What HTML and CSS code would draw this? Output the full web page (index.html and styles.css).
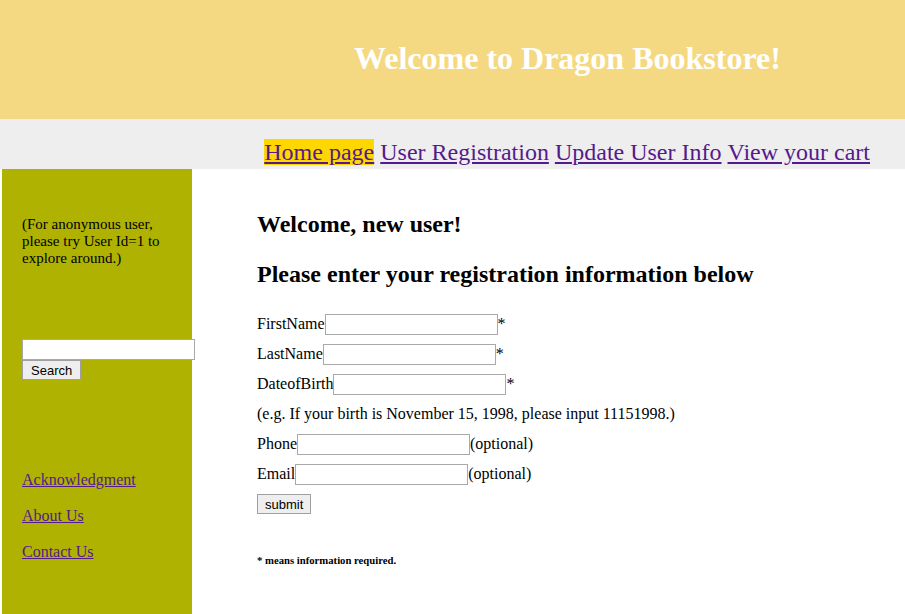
FILE: index.html
```html
<!DOCTYPE html>
<html>
<head>
<meta charset="utf-8">
<title>Dragon Bookstore</title>
<link rel="stylesheet" href="styles.css">
</head>
<body>
<div class="header"><h1 class="title">Welcome to Dragon Bookstore!</h1></div>
<div class="nav">
  <a class="nav-link current" href="#">Home page</a>
  <a class="nav-link" href="#">User Registration</a>
  <a class="nav-link" href="#">Update User Info</a>
  <a class="nav-link" href="#">View your cart</a>
</div>
<div class="body-row">
  <div class="sidebar">
    <p class="hint">(For anonymous user, please try User Id=1 to explore around.)</p>
    <form class="search">
      <input class="search-input" type="text">
      <button class="btn search-btn" type="button">Search</button>
    </form>
    <ul class="side-links">
      <li><a href="#">Acknowledgment</a></li>
      <li><a href="#">About Us</a></li>
      <li><a href="#">Contact Us</a></li>
    </ul>
  </div>
  <div class="main">
    <h2 class="heading">Welcome, new user!</h2>
    <h2 class="heading second">Please enter your registration information below</h2>
    <form class="reg">
      <div class="row">FirstName<input class="field" type="text">*</div>
      <div class="row">LastName<input class="field" type="text">*</div>
      <div class="row">DateofBirth<input class="field" type="text">*</div>
      <div class="row">(e.g. If your birth is November 15, 1998, please input 11151998.)</div>
      <div class="row">Phone<input class="field" type="text">(optional)</div>
      <div class="row">Email<input class="field" type="text">(optional)</div>
      <div class="row"><button class="btn" type="button">submit</button></div>
    </form>
    <p class="note">* means information required.</p>
  </div>
</div>
</body>
</html>
```
FILE: styles.css
```css
html, body {
  margin: 0;
  padding: 0;
  background: #fff;
  font-family: "Liberation Serif", "Times New Roman", serif;
  color: #000;
}
.header {
  height: 119px;
  background: #f5d982;
  display: flex;
  align-items: center;
}
.title {
  margin: 0 0 2px 0;
  padding-left: 354px;
  color: #fff;
  font-size: 32px;
  font-weight: bold;
}
.nav {
  height: 50px;
  background: #eeeeee;
  display: flex;
  justify-content: flex-end;
  align-items: flex-end;
  padding-right: 35px;
  gap: 6px;
}
.nav-link {
  font-size: 24px;
  color: #551a8b;
  line-height: 26px;
  margin-bottom: 4px;
}
.nav-link.current {
  background: #ffd700;
}
.body-row {
  display: flex;
  align-items: stretch;
  min-height: 445px;
}
.sidebar {
  width: 190px;
  margin-left: 2px;
  background: #afb200;
  padding: 47px 4px 0 20px;
  box-sizing: border-box;
  font-size: 15px;
}
.hint {
  margin: 0;
  line-height: 17px;
}
.search {
  margin-top: 72px;
  display: flex;
  flex-direction: column;
  align-items: flex-start;
}
.search-input {
  width: 173px;
  height: 21px;
  box-sizing: border-box;
  border: 1px solid #a9a9a9;
  margin: 0;
  background: #fff;
  flex-shrink: 0;
}
.btn {
  font-family: Arial, "Liberation Sans", sans-serif;
  font-size: 13px;
  padding: 1px 7px;
  height: 20px;
  border: 1px solid #a0a0a0;
  background: #eeeeee;
  color: #000;
  margin: 0;
}
.search-btn {
  padding: 1px 8px;
}
.side-links {
  list-style: none;
  margin: 91px 0 0 0;
  padding: 0;
  display: flex;
  flex-direction: column;
  gap: 18px;
  font-size: 16px;
  line-height: 18px;
}
.side-links a {
  color: #551a8b;
}
.main {
  padding: 41px 0 0 65px;
}
.heading {
  margin: 0 0 22px 0;
  font-size: 24px;
  line-height: 28px;
}
.heading.second {
  margin-bottom: 21px;
}
.reg {
  margin: 0;
  font-size: 16px;
}
.row {
  height: 30px;
  display: flex;
  align-items: center;
}
.field {
  width: 173px;
  height: 21px;
  box-sizing: border-box;
  border: 1px solid #a9a9a9;
  margin: 0;
}
.note {
  font-size: 10.7px;
  line-height: 12px;
  font-weight: bold;
  margin: 35px 0 0 0;
}
```
